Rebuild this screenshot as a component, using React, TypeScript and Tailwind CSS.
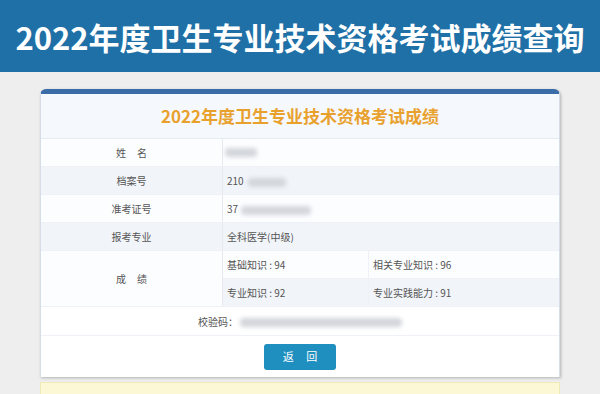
const font = "font-['Noto_Sans_CJK_SC','Noto_Sans',sans-serif]";

function Blur({ w }: { w: string }) {
  return <span className={`inline-block h-[9px] ${w} rounded-sm bg-[#d3d6db] blur-[2px] align-middle`} />;
}

export default function App() {
  return (
    <div className={`w-[600px] h-[394px] overflow-hidden bg-[#eeeeee] ${font}`}>
      <div className="h-[72px] bg-[#1f70a6] flex items-center justify-center">
        <h1 className="text-[31px] font-bold text-white leading-none">
          2022年度卫生专业技术资格考试成绩查询
        </h1>
      </div>

      <div className="mx-[40px] mt-[17px] rounded-t-[6px] border-t-[5px] border-[#3a6ca8] bg-white shadow-[1px_1px_3px_rgba(0,0,0,0.25)] border-x border-x-[#d6dde6]">
        <div className="h-[45px] bg-[#f5f8fc] flex items-center justify-center border-b border-[#e6ebf2]">
          <span className="text-[17px] font-bold text-[#e9a12e]">2022年度卫生专业技术资格考试成绩</span>
        </div>

        <div className="text-[10px] text-[#555]">
          <div className="flex h-[28px] border-b border-[#eef1f5] bg-[#fcfdff]">
            <div className="w-[182px] flex items-center justify-center border-r border-[#e6eaf0]">姓&nbsp;&nbsp;&nbsp;&nbsp;&nbsp;名</div>
            <div className="flex-1 flex items-center pl-[2px]"><Blur w="w-[32px]" /></div>
          </div>
          <div className="flex h-[28px] border-b border-[#eef1f5] bg-[#f1f4f9]">
            <div className="w-[182px] flex items-center justify-center border-r border-[#e6eaf0]">档案号</div>
            <div className="flex-1 flex items-center pl-[4px]">210<span className="ml-[4px]"><Blur w="w-[38px]" /></span></div>
          </div>
          <div className="flex h-[28px] border-b border-[#eef1f5] bg-[#fcfdff]">
            <div className="w-[182px] flex items-center justify-center border-r border-[#e6eaf0]">准考证号</div>
            <div className="flex-1 flex items-center pl-[4px]">37<span className="ml-[3px]"><Blur w="w-[70px]" /></span></div>
          </div>
          <div className="flex h-[28px] border-b border-[#eef1f5] bg-[#f1f4f9]">
            <div className="w-[182px] flex items-center justify-center border-r border-[#e6eaf0]">报考专业</div>
            <div className="flex-1 flex items-center pl-[4px]">全科医学(中级)</div>
          </div>
          <div className="flex h-[56px] border-b border-[#eef1f5]">
            <div className="w-[182px] flex items-center justify-center border-r border-[#e6eaf0] bg-[#fcfdff]">成&nbsp;&nbsp;&nbsp;&nbsp;&nbsp;绩</div>
            <div className="flex-1 grid grid-cols-[146px_1fr] grid-rows-2">
              <div className="flex items-center pl-[4px] border-r border-b border-[#eef1f5] bg-[#fcfdff]">基础知识 : 94</div>
              <div className="flex items-center pl-[4px] border-b border-[#eef1f5] bg-[#fcfdff]">相关专业知识 : 96</div>
              <div className="flex items-center pl-[4px] border-r border-[#eef1f5] bg-[#f1f4f9]">专业知识 : 92</div>
              <div className="flex items-center pl-[4px] bg-[#f1f4f9]">专业实践能力 : 91</div>
            </div>
          </div>
          <div className="flex h-[29px] items-center justify-center border-b border-[#eef1f5] bg-white">
            校验码：<span className="ml-[2px]"><Blur w="w-[162px]" /></span>
          </div>
          <div className="flex h-[41px] items-center justify-center bg-white">
            <button className="w-[72px] h-[26px] rounded-[3px] bg-[#1f8fbf] text-white text-[11px]">返&nbsp;&nbsp;&nbsp;&nbsp;&nbsp;回</button>
          </div>
        </div>
      </div>

      <div className="mx-[40px] mt-[5px] h-[20px] bg-[#fcf8d6] border border-[#f0e9b8]" />
    </div>
  );
}
